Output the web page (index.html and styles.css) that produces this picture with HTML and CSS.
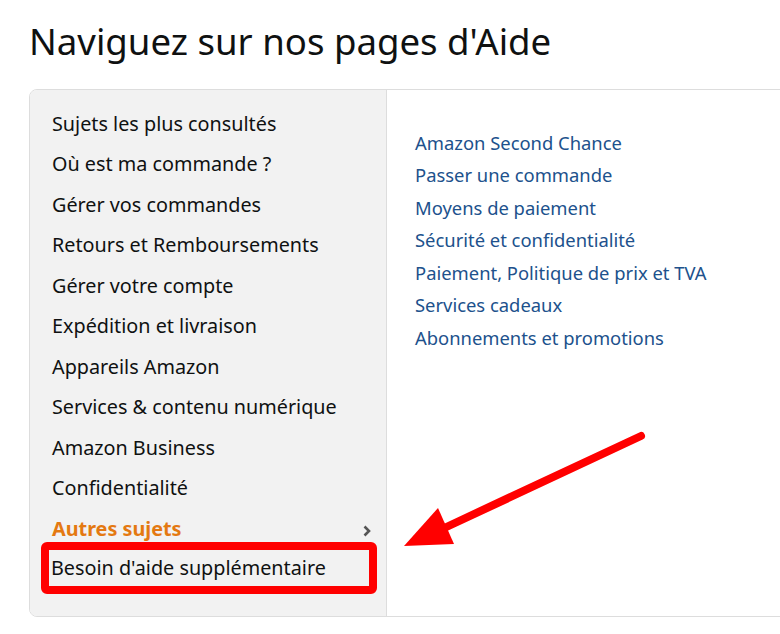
FILE: index.html
```html
<!DOCTYPE html>
<html lang="fr">
<head>
<meta charset="utf-8">
<title>Aide</title>
<link rel="stylesheet" href="styles.css">
</head>
<body>
<div class="page">
  <h1 class="title">Naviguez sur nos pages d'Aide</h1>
  <div class="help-box">
    <ul class="topics">
      <li class="topic">Sujets les plus consultés</li>
      <li class="topic">Où est ma commande ?</li>
      <li class="topic">Gérer vos commandes</li>
      <li class="topic">Retours et Remboursements</li>
      <li class="topic">Gérer votre compte</li>
      <li class="topic">Expédition et livraison</li>
      <li class="topic">Appareils Amazon</li>
      <li class="topic">Services &amp; contenu numérique</li>
      <li class="topic">Amazon Business</li>
      <li class="topic">Confidentialité</li>
      <li class="topic topic-active"><span>Autres sujets</span><span class="chev"><svg width="10" height="12" viewBox="0 0 10 12"><path d="M2.5 1.5 L7 6 L2.5 10.5" fill="none" stroke="#555" stroke-width="2.6"/></svg></span></li>
      <li class="topic topic-marked">Besoin d'aide supplémentaire</li>
    </ul>
    <ul class="links">
      <li class="link">Amazon Second Chance</li>
      <li class="link">Passer une commande</li>
      <li class="link">Moyens de paiement</li>
      <li class="link">Sécurité et confidentialité</li>
      <li class="link">Paiement, Politique de prix et TVA</li>
      <li class="link">Services cadeaux</li>
      <li class="link">Abonnements et promotions</li>
    </ul>
  </div>
  <svg class="arrow" width="780" height="634" viewBox="0 0 780 634">
    <line x1="641" y1="436" x2="440" y2="530" stroke="#ff0000" stroke-width="8" stroke-linecap="round"/>
    <polygon points="404,546 438,508 454,544" fill="#ff0000"/>
  </svg>
</div>
</body>
</html>
```
FILE: styles.css
```css
* { box-sizing: border-box; }
html, body { margin: 0; padding: 0; background: #fff; }
body { font-family: "Noto Sans", "Open Sans", sans-serif; color: #0f1111; overflow: hidden; }
.page { position: relative; width: 780px; height: 634px; padding: 14px 0 0 29px; overflow: hidden; }
.title { margin: 0 0 21px 0; font-size: 36.6px; font-weight: 400; line-height: 54px; color: #0f1111; }
.help-box { display: flex; width: 800px; height: 528px; border: 1px solid #dddddd; border-radius: 8px; overflow: hidden; }
.topics { list-style: none; margin: 0; padding: 13px 18px 0 22px; width: 357px; flex-shrink: 0; background: #f2f2f2; border-right: 1px solid #dddddd; }
.topic { display: flex; align-items: center; justify-content: space-between; height: 40.5px; font-size: 19.8px; color: #0f1111; white-space: nowrap; }
.topic-active { color: #e47911; font-weight: 700; }
.chev { display: flex; align-items: center; margin-top: 6px; margin-right: -4px; }
.topic-marked { border: 8px solid #ff0000; border-radius: 6px; margin: -7px 0 0 -11px; padding-left: 2px; height: 52.5px; width: 336px; }
.links { list-style: none; margin: 0; padding: 36px 0 0 28px; }
.link { height: 32.5px; display: flex; align-items: center; font-size: 18.4px; color: #20518c; white-space: nowrap; }
.arrow { position: absolute; left: 0; top: 0; pointer-events: none; }
```
